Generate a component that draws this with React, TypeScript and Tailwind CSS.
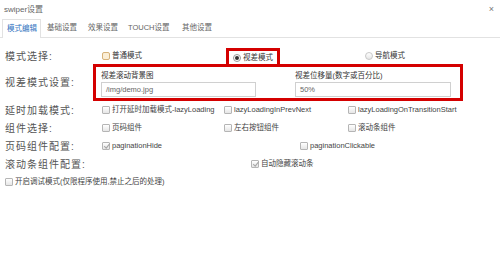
import React from "react";

const font = { fontFamily: '"Liberation Sans", "Noto Sans CJK SC", sans-serif' };

function Box({ checked }: { checked?: boolean }) {
  return (
    <span className="relative inline-block w-[8px] h-[8px] shrink-0 rounded-[1px] border border-[#b5b5b5] bg-gradient-to-b from-white to-[#e6e6e6]">
      {checked && (
        <svg className="absolute left-[0px] top-[-1px]" width="8" height="8" viewBox="0 0 8 8">
          <path d="M1.2 4.2 L3.2 6.2 L6.8 1.6" fill="none" stroke="#a8a8a8" strokeWidth="1.1" />
        </svg>
      )}
    </span>
  );
}

function Check({ label, checked }: { label: string; checked?: boolean }) {
  return (
    <span className="flex items-center gap-[2px] text-[7.5px] text-[#444] whitespace-nowrap">
      <Box checked={checked} />
      <span>{label}</span>
    </span>
  );
}

function Label({ text, w }: { text: string; w: string }) {
  return (
    <span className={`${w} shrink-0 text-[10px] tracking-[1px] text-[#555] whitespace-nowrap`}>{text}</span>
  );
}

const tabs = [
  { t: "模式编辑", w: "w-[39px]" },
  { t: "基础设置", w: "w-[41px]" },
  { t: "效果设置", w: "w-[40px]" },
  { t: "TOUCH设置", w: "w-[54px]" },
  { t: "其他设置", w: "w-[42px]" },
];

export default function App() {
  return (
    <div className="w-[500px] h-[276px] bg-white relative" style={font}>
      {/* Header */}
      <div className="h-[20px] flex items-center justify-between pl-[4px] pr-[6px]">
        <span className="text-[8px] text-[#666]">swiper设置</span>
        <span className="text-[9px] text-[#777]">×</span>
      </div>

      {/* Tabs */}
      <div className="h-[18px] flex items-end pl-[2px] border-b border-[#e2e2e2]">
        {tabs.map((tab, i) => (
          <div
            key={tab.t}
            className={`${tab.w} flex items-center pl-[4px] text-[7.5px] whitespace-nowrap ${
              i === 0
                ? "h-[19px] border border-b-0 border-[#e2e2e2] bg-white text-[#2f72c0] -mb-[1px] mr-[2px]"
                : "h-[18px] text-[#666]"
            }`}
          >
            {tab.t}
          </div>
        ))}
      </div>

      <div className="pt-[10px] pl-[5px] flex flex-col">
        {/* 模式选择 */}
        <div className="h-[16px] flex items-center">
          <Label text="模式选择:" w="w-[97px]" />
          <span className="flex items-center gap-[2px] text-[7.5px] text-[#333] w-[124px]">
            <span className="w-[8px] h-[8px] rounded-[2px] border border-[#d6b27a] bg-[#fbeed6]" />
            普通模式
          </span>
          <span className="h-[16px] self-end flex items-center gap-[2px] px-[4px] border-[3px] border-b-0 border-[#d40000] text-[7.5px] text-[#333]">
            <span className="w-[8px] h-[8px] rounded-full border border-[#999] bg-white flex items-center justify-center">
              <span className="w-[4px] h-[4px] rounded-full bg-[#333]" />
            </span>
            视差模式
          </span>
          <span className="ml-[85px] flex items-center gap-[2px] text-[7.5px] text-[#333]">
            <span className="w-[8px] h-[8px] rounded-full border border-[#c8c8c8] bg-gradient-to-b from-white to-[#e6e6e6]" />
            导航模式
          </span>
        </div>

        {/* 视差模式设置 */}
        <div className="h-[37px] flex items-center">
          <Label text="视差模式设置:" w="w-[88px]" />
          <div className="h-[37px] w-[370px] border-[3px] border-[#d40000] flex pl-[5px] pt-[4px] gap-[39px]">
            <div className="flex flex-col gap-[1px]">
              <span className="text-[7.5px] text-[#333] leading-[10px]">视差滚动背景图</span>
              <div className="w-[155px] h-[15px] border border-[#d0d0d0] flex items-center px-[4px] text-[7.5px] text-[#666]">
                /img/demo.jpg
              </div>
            </div>
            <div className="flex flex-col gap-[1px]">
              <span className="text-[7.5px] text-[#333] leading-[10px]">视差位移量(数字或百分比)</span>
              <div className="w-[156px] h-[15px] border border-[#d0d0d0] flex items-center px-[4px] text-[7.5px] text-[#666]">
                50%
              </div>
            </div>
          </div>
        </div>

        {/* 延时加载模式 */}
        <div className="h-[18px] flex items-center">
          <Label text="延时加载模式:" w="w-[97px]" />
          <span className="w-[122px]"><Check label="打开延时加载模式-lazyLoading" /></span>
          <span className="w-[124px]"><Check label="lazyLoadingInPrevNext" /></span>
          <Check label="lazyLoadingOnTransitionStart" />
        </div>

        {/* 组件选择 */}
        <div className="h-[18px] flex items-center">
          <Label text="组件选择:" w="w-[97px]" />
          <span className="w-[122px]"><Check label="页码组件" /></span>
          <span className="w-[124px]"><Check label="左右按钮组件" /></span>
          <Check label="滚动条组件" />
        </div>

        {/* 页码组件配置 */}
        <div className="h-[18px] flex items-center">
          <Label text="页码组件配置:" w="w-[97px]" />
          <span className="w-[198px]"><Check label="paginationHide" checked /></span>
          <Check label="paginationClickable" />
        </div>

        {/* 滚动条组件配置 */}
        <div className="h-[18px] flex items-center">
          <Label text="滚动条组件配置:" w="w-[246px]" />
          <Check label="自动隐藏滚动条" checked />
        </div>

        <div className="h-[18px] flex items-center">
          <Check label="开启调试模式(仅限程序使用,禁止之后的处理)" />
        </div>
      </div>
    </div>
  );
}
